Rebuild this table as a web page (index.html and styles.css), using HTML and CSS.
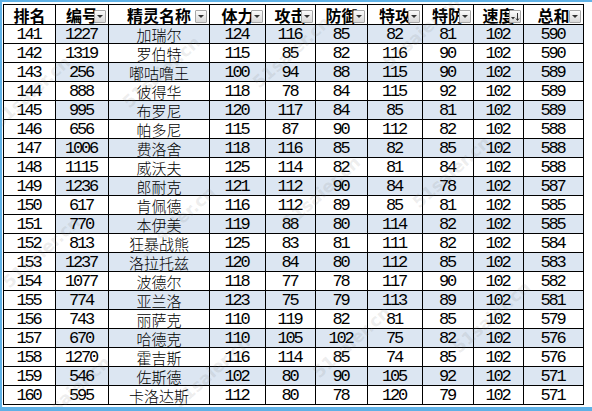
FILE: index.html
```html
<!DOCTYPE html>
<html lang="zh">
<head>
<meta charset="utf-8">
<link rel="stylesheet" href="styles.css">
</head>
<body>
<div class="sheet">
  <div class="table">
    <div class="row head">
      <div class="c first">排名</div>
      <div class="c">编号<span class="dd"></span></div>
      <div class="c">精灵名称<span class="dd"></span></div>
      <div class="c">体力<span class="dd"></span></div>
      <div class="c">攻击<span class="dd"></span></div>
      <div class="c">防御<span class="dd"></span></div>
      <div class="c">特攻<span class="dd"></span></div>
      <div class="c">特防<span class="dd"></span></div>
      <div class="c">速度<span class="dd sort"><svg width="10" height="11" viewBox="0 0 10 11"><path d="M1 6h4l-2 2.5z" fill="#333"/><path d="M7.5 2v7M6 7.5l1.5 2 1.5-2" stroke="#333" stroke-width="1" fill="none"/></svg></span></div>
      <div class="c">总和<span class="dd"></span></div>
    </div>
    <div class="row odd"><div class="c n first">141</div><div class="c n">1227</div><div class="c zh">加瑞尔</div><div class="c n">124</div><div class="c n">116</div><div class="c n">85</div><div class="c n">82</div><div class="c n">81</div><div class="c n">102</div><div class="c n">590</div></div>
    <div class="row"><div class="c n first">142</div><div class="c n">1319</div><div class="c zh">罗伯特</div><div class="c n">115</div><div class="c n">85</div><div class="c n">82</div><div class="c n">116</div><div class="c n">90</div><div class="c n">102</div><div class="c n">590</div></div>
    <div class="row odd"><div class="c n first">143</div><div class="c n">256</div><div class="c zh">嘟咕噜王</div><div class="c n">100</div><div class="c n">94</div><div class="c n">88</div><div class="c n">115</div><div class="c n">90</div><div class="c n">102</div><div class="c n">589</div></div>
    <div class="row"><div class="c n first">144</div><div class="c n">888</div><div class="c zh">彼得华</div><div class="c n">118</div><div class="c n">78</div><div class="c n">84</div><div class="c n">115</div><div class="c n">92</div><div class="c n">102</div><div class="c n">589</div></div>
    <div class="row odd"><div class="c n first">145</div><div class="c n">995</div><div class="c zh">布罗尼</div><div class="c n">120</div><div class="c n">117</div><div class="c n">84</div><div class="c n">85</div><div class="c n">81</div><div class="c n">102</div><div class="c n">589</div></div>
    <div class="row"><div class="c n first">146</div><div class="c n">656</div><div class="c zh">帕多尼</div><div class="c n">115</div><div class="c n">87</div><div class="c n">90</div><div class="c n">112</div><div class="c n">82</div><div class="c n">102</div><div class="c n">588</div></div>
    <div class="row odd"><div class="c n first">147</div><div class="c n">1006</div><div class="c zh">费洛舍</div><div class="c n">118</div><div class="c n">116</div><div class="c n">85</div><div class="c n">82</div><div class="c n">85</div><div class="c n">102</div><div class="c n">588</div></div>
    <div class="row"><div class="c n first">148</div><div class="c n">1115</div><div class="c zh">威沃夫</div><div class="c n">125</div><div class="c n">114</div><div class="c n">82</div><div class="c n">81</div><div class="c n">84</div><div class="c n">102</div><div class="c n">588</div></div>
    <div class="row odd"><div class="c n first">149</div><div class="c n">1236</div><div class="c zh">郎耐克</div><div class="c n">121</div><div class="c n">112</div><div class="c n">90</div><div class="c n">84</div><div class="c n">78</div><div class="c n">102</div><div class="c n">587</div></div>
    <div class="row"><div class="c n first">150</div><div class="c n">617</div><div class="c zh">肯佩德</div><div class="c n">116</div><div class="c n">112</div><div class="c n">89</div><div class="c n">85</div><div class="c n">81</div><div class="c n">102</div><div class="c n">585</div></div>
    <div class="row odd"><div class="c n first">151</div><div class="c n">770</div><div class="c zh">本伊美</div><div class="c n">119</div><div class="c n">88</div><div class="c n">80</div><div class="c n">114</div><div class="c n">82</div><div class="c n">102</div><div class="c n">585</div></div>
    <div class="row"><div class="c n first">152</div><div class="c n">813</div><div class="c zh">狂暴战熊</div><div class="c n">125</div><div class="c n">83</div><div class="c n">81</div><div class="c n">111</div><div class="c n">82</div><div class="c n">102</div><div class="c n">584</div></div>
    <div class="row odd"><div class="c n first">153</div><div class="c n">1237</div><div class="c zh">洛拉托兹</div><div class="c n">120</div><div class="c n">84</div><div class="c n">80</div><div class="c n">112</div><div class="c n">85</div><div class="c n">102</div><div class="c n">583</div></div>
    <div class="row"><div class="c n first">154</div><div class="c n">1077</div><div class="c zh">波德尔</div><div class="c n">118</div><div class="c n">77</div><div class="c n">78</div><div class="c n">117</div><div class="c n">90</div><div class="c n">102</div><div class="c n">582</div></div>
    <div class="row odd"><div class="c n first">155</div><div class="c n">774</div><div class="c zh">亚兰洛</div><div class="c n">123</div><div class="c n">75</div><div class="c n">79</div><div class="c n">113</div><div class="c n">89</div><div class="c n">102</div><div class="c n">581</div></div>
    <div class="row"><div class="c n first">156</div><div class="c n">743</div><div class="c zh">丽萨克</div><div class="c n">110</div><div class="c n">119</div><div class="c n">82</div><div class="c n">81</div><div class="c n">85</div><div class="c n">102</div><div class="c n">579</div></div>
    <div class="row odd"><div class="c n first">157</div><div class="c n">670</div><div class="c zh">哈德克</div><div class="c n">110</div><div class="c n">105</div><div class="c n">102</div><div class="c n">75</div><div class="c n">82</div><div class="c n">102</div><div class="c n">576</div></div>
    <div class="row"><div class="c n first">158</div><div class="c n">1270</div><div class="c zh">霍吉斯</div><div class="c n">116</div><div class="c n">114</div><div class="c n">85</div><div class="c n">74</div><div class="c n">85</div><div class="c n">102</div><div class="c n">576</div></div>
    <div class="row odd"><div class="c n first">159</div><div class="c n">546</div><div class="c zh">佐斯德</div><div class="c n">102</div><div class="c n">80</div><div class="c n">90</div><div class="c n">105</div><div class="c n">92</div><div class="c n">102</div><div class="c n">571</div></div>
    <div class="row"><div class="c n first">160</div><div class="c n">595</div><div class="c zh">卡洛达斯</div><div class="c n">112</div><div class="c n">80</div><div class="c n">78</div><div class="c n">120</div><div class="c n">79</div><div class="c n">102</div><div class="c n">571</div></div>
  </div>
  <div class="marks">
    <span class="wm w1">51saier.cn</span>
    <span class="wm w2">51saier.cn</span>
    <span class="wm w3">51saier.cn</span>
    <span class="wm w4">51saier.cn</span>
    <span class="wm w5">51saier.cn</span>
    <span class="wm w6">51saier.cn</span>
    <span class="wm w7">51saier.cn</span>
    <span class="wm w8">51saier.cn</span>
    <span class="wm w9">51saier.cn</span>
    <span class="wm w10">51saier.cn</span>
    <span class="wm w11">51saier.cn</span>
    <span class="wm w12">51saier.cn</span>
  </div>
</div>
</body>
</html>
```

FILE: styles.css
```css
html, body {
  margin: 0;
  padding: 0;
}
body {
  width: 592px;
  height: 411px;
  overflow: hidden;
  background: #fff;
}
.sheet {
  position: relative;
  box-sizing: border-box;
  height: 411px;
  border-left: 2px solid #5eb1e6;
  border-top: 2px solid #5eb1e6;
  border-bottom: 4px solid #5eb1e6;
  padding: 2px 0 0 1px;
  overflow: hidden;
  background: #fff;
}
.table {
  width: max-content;
  border-left: 1px solid #000;
  border-top: 1px solid #000;
}
.row {
  display: grid;
  grid-template-columns: 52px 53px 101px 56px 50px 52px 55px 51px 50px 60px;
  height: 19px;
}
.row.head {
  height: 20px;
}
.c {
  position: relative;
  box-sizing: border-box;
  border-right: 1px solid #000;
  border-bottom: 1px solid #000;
  display: flex;
  align-items: center;
  justify-content: center;
  overflow: hidden;
  white-space: nowrap;
  color: #000;
}
.row.odd .c {
  background: #dce6f2;
}
.row.odd .c.first {
  background: #fff;
}
.head .c {
  font-family: "Noto Sans CJK SC", sans-serif;
  font-weight: 700;
  font-size: 16px;
  line-height: 18px;
  padding-top: 1px;
  background: #fff;
}
.n {
  font-family: "Liberation Mono", monospace;
  font-size: 17px;
  letter-spacing: -2.2px;
  text-indent: -2px;
  line-height: 17px;
  padding-top: 1px;
}
.zh {
  font-family: "Noto Sans CJK SC", sans-serif;
  font-size: 15px;
  font-weight: 300;
  line-height: 17px;
  padding-top: 1px;
}
.dd {
  position: absolute;
  right: 2px;
  bottom: 1px;
  width: 12px;
  height: 13px;
  box-sizing: border-box;
  border: 1px solid #a7a7a7;
  border-radius: 1px;
  background: linear-gradient(#fbfbfb, #d9d9d9);
  display: flex;
  align-items: center;
  justify-content: center;
}
.dd::after {
  content: "";
  width: 0;
  height: 0;
  border-left: 3px solid transparent;
  border-right: 3px solid transparent;
  border-top: 3px solid #333;
}
.dd.sort::after {
  display: none;
}
.dd.sort svg {
  display: block;
}
.marks {
  position: absolute;
  inset: 0;
  pointer-events: none;
}
.wm {
  position: absolute;
  font-family: "DejaVu Sans", sans-serif;
  font-weight: 700;
  font-size: 17px;
  color: rgba(120, 120, 120, 0.14);
  transform: rotate(-42deg);
  transform-origin: left bottom;
  white-space: nowrap;
}
.w1 { left: 0px; top: 110px; }
.w2 { left: 130px; top: 90px; }
.w3 { left: 260px; top: 70px; }
.w4 { left: 390px; top: 50px; }
.w5 { left: 10px; top: 270px; }
.w6 { left: 145px; top: 240px; }
.w7 { left: 290px; top: 210px; }
.w8 { left: 420px; top: 190px; }
.w9 { left: 40px; top: 410px; }
.w10 { left: 180px; top: 390px; }
.w11 { left: 320px; top: 360px; }
.w12 { left: 460px; top: 335px; }
```
